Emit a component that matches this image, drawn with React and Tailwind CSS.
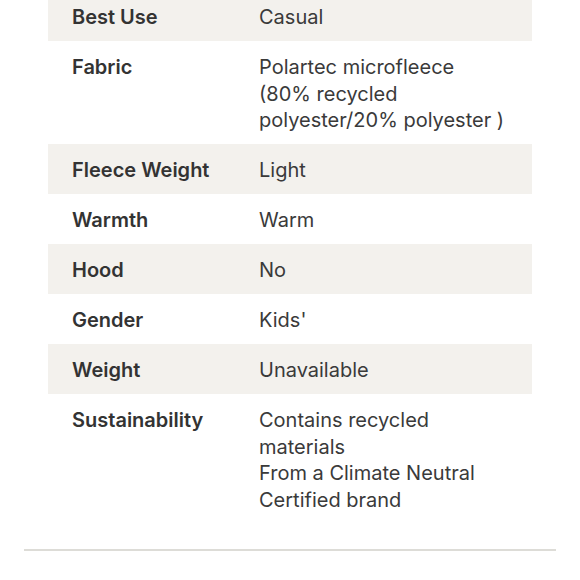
export default function App() {
  const rows = [
    { k: "Best Use", v: ["Casual"] },
    { k: "Fabric", v: ["Polartec microfleece", "(80% recycled", "polyester/20% polyester )"] },
    { k: "Fleece Weight", v: ["Light"] },
    { k: "Warmth", v: ["Warm"] },
    { k: "Hood", v: ["No"] },
    { k: "Gender", v: ["Kids'"] },
    { k: "Weight", v: ["Unavailable"] },
    { k: "Sustainability", v: ["Contains recycled", "materials", "From a Climate Neutral", "Certified brand"] },
  ];
  return (
    <div className="w-[580px] h-[580px] overflow-hidden bg-white text-[#333333] font-['Inter',sans-serif]">
      <div className="px-6">
        <div className="mx-6 -mt-[9px] flex flex-col">
          {rows.map((r, i) => (
            <div key={r.k} className={`flex pt-[13px] pb-[10.5px] leading-[26.5px] ${i % 2 === 0 ? "bg-[#f3f1ed]" : "bg-white"}`}>
              <div className="w-[211px] shrink-0 pl-6 text-[20px] font-semibold">{r.k}</div>
              <div className="flex-1 pr-6 text-[20px] font-normal text-[#3a3a3a]">
                {r.v.map((l, j) => (
                  <div key={j}>{l}</div>
                ))}
              </div>
            </div>
          ))}
        </div>
        <div className="mt-[25.5px] h-[2px] bg-[#dddcd7]" />
      </div>
    </div>
  );
}
